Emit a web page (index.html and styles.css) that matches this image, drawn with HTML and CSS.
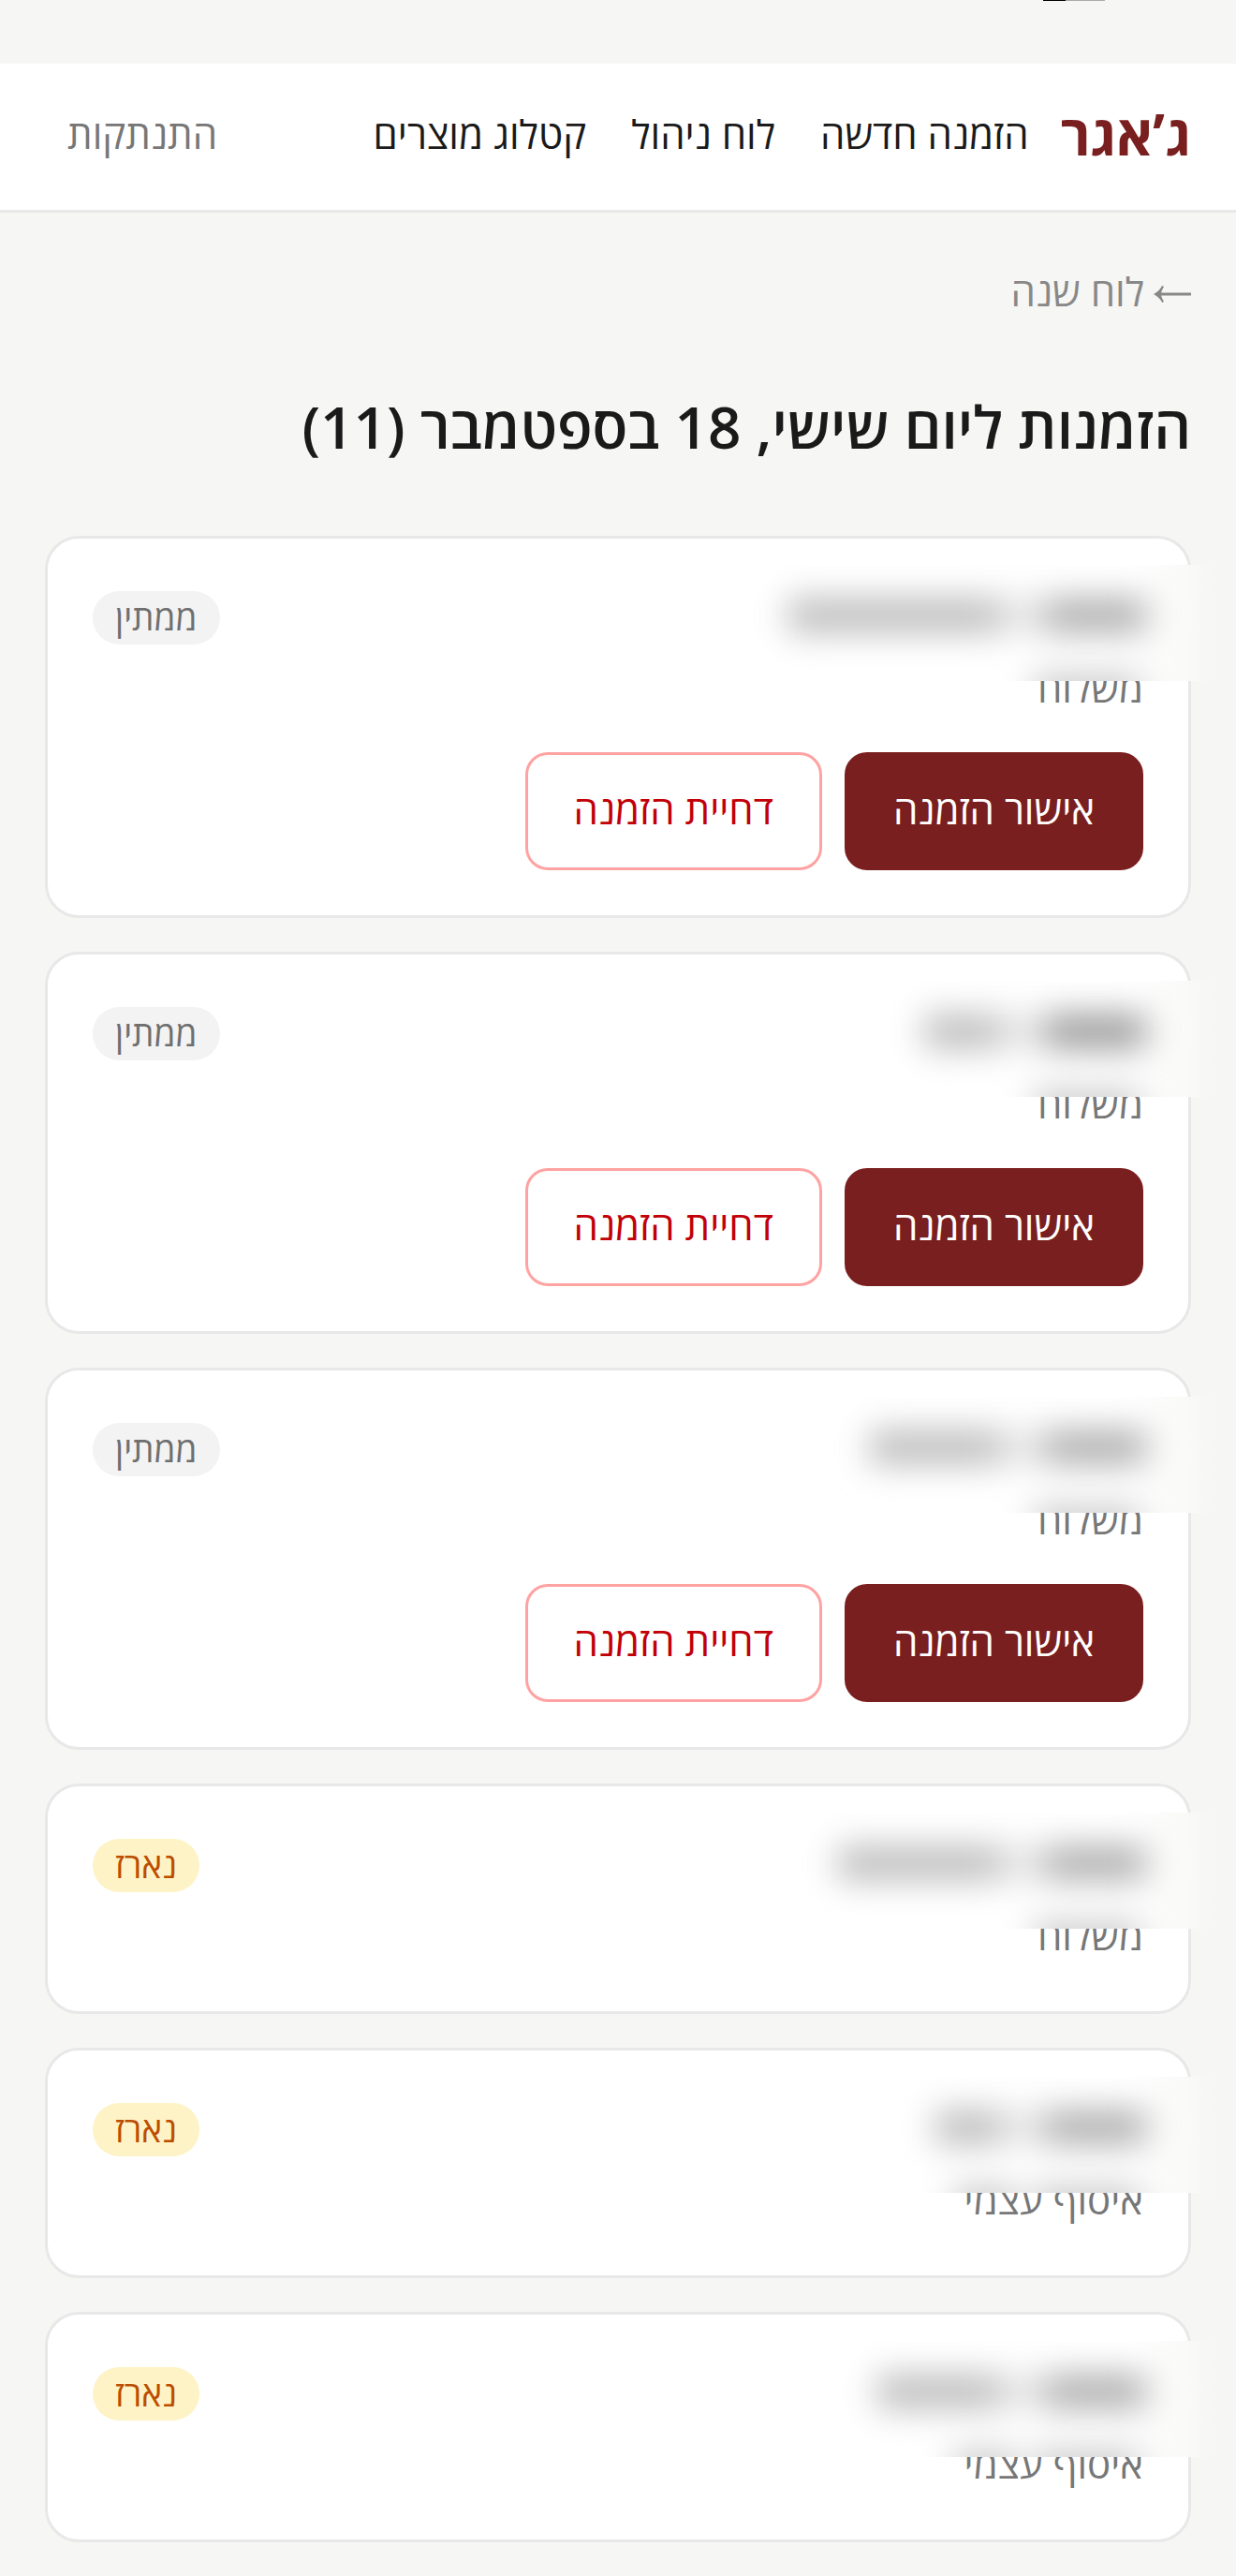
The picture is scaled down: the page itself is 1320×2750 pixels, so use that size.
FILE: index.html
```html
<!DOCTYPE html>
<html lang="he" dir="rtl">
<head>
    <meta charset="UTF-8">
    <meta name="viewport" content="width=device-width, initial-scale=1.0">
    <title>הזמנות ליום שישי</title>
    <link rel="stylesheet" href="styles.css">
</head>
<body>
    <div class="status-bar"><span class="battery"></span></div>

    <header class="navbar">
        <a class="logo" href="#">ג’אגר</a>
        <nav class="nav-links">
            <a href="#">הזמנה חדשה</a>
            <a href="#">לוח ניהול</a>
            <a href="#">קטלוג מוצרים</a>
        </nav>
        <button class="logout" type="button">התנתקות</button>
    </header>

    <main class="page">
        <a class="back" href="#">
            <svg class="arrow" viewBox="0 0 40 20" aria-hidden="true">
                <path d="M5 10H40" fill="none" stroke="currentColor" stroke-width="3"/>
                <path d="M0 10Q7 6 9 1L11 2Q8 7 8 10Q8 13 11 18L9 19Q7 14 0 10Z" fill="currentColor"/>
            </svg>
            <span>לוח שנה</span>
        </a>
        <h1>הזמנות ליום שישי, 18 בספטמבר (11)</h1>

        <div class="orders">
            <article class="card">
                <div class="card-head">
                    <p class="delivery">משלוח</p>
                    <span class="badge">ממתין</span>
                </div>
                <div class="actions">
                    <button class="approve" type="button">אישור הזמנה</button>
                    <button class="reject" type="button">דחיית הזמנה</button>
                </div>
                <div class="private" aria-hidden="true">
                    <div class="smudge"><i class="num"></i><i class="dash"></i><i class="name" style="width: 225px"></i></div>
                    <div class="smudge low"><i class="word"></i></div>
                </div>
            </article>

            <article class="card">
                <div class="card-head">
                    <p class="delivery">משלוח</p>
                    <span class="badge">ממתין</span>
                </div>
                <div class="actions">
                    <button class="approve" type="button">אישור הזמנה</button>
                    <button class="reject" type="button">דחיית הזמנה</button>
                </div>
                <div class="private" aria-hidden="true">
                    <div class="smudge"><i class="num dark"></i><i class="dash"></i><i class="name" style="width: 80px"></i></div>
                    <div class="smudge low"><i class="word"></i></div>
                </div>
            </article>

            <article class="card">
                <div class="card-head">
                    <p class="delivery">משלוח</p>
                    <span class="badge">ממתין</span>
                </div>
                <div class="actions">
                    <button class="approve" type="button">אישור הזמנה</button>
                    <button class="reject" type="button">דחיית הזמנה</button>
                </div>
                <div class="private" aria-hidden="true">
                    <div class="smudge"><i class="num"></i><i class="dash"></i><i class="name" style="width: 138px"></i></div>
                    <div class="smudge low"><i class="word"></i></div>
                </div>
            </article>

            <article class="card">
                <div class="card-head">
                    <p class="delivery">משלוח</p>
                    <span class="badge packed">נארז</span>
                </div>
                <div class="private" aria-hidden="true">
                    <div class="smudge"><i class="num"></i><i class="dash"></i><i class="name" style="width: 172px"></i></div>
                    <div class="smudge low"><i class="word"></i></div>
                </div>
            </article>

            <article class="card">
                <div class="card-head">
                    <p class="delivery">איסוף עצמי</p>
                    <span class="badge packed">נארז</span>
                </div>
                <div class="private" aria-hidden="true">
                    <div class="smudge"><i class="num"></i><i class="dash"></i><i class="name" style="width: 68px"></i></div>
                    <div class="smudge low"><i class="word"></i><i class="word short"></i></div>
                </div>
            </article>

            <article class="card">
                <div class="card-head">
                    <p class="delivery">איסוף עצמי</p>
                    <span class="badge packed">נארז</span>
                </div>
                <div class="private" aria-hidden="true">
                    <div class="smudge"><i class="num"></i><i class="dash"></i><i class="name" style="width: 130px"></i></div>
                    <div class="smudge low"><i class="word"></i><i class="word short"></i></div>
                </div>
            </article>
        </div>
    </main>
</body>
</html>
```
FILE: styles.css
```css
* {
    box-sizing: border-box;
}

body {
    margin: 0;
    background-color: #f6f6f4;
    color: #1a1a1a;
    font-family: "Open Sans", "Noto Sans", sans-serif;
    font-size: 42px;
    line-height: 60px;
}

a {
    color: inherit;
    text-decoration: none;
}

button {
    font: inherit;
    cursor: pointer;
}

.status-bar {
    height: 68px;
    padding-right: 140px;
}

.battery {
    display: block;
    width: 66px;
    height: 1px;
    background: linear-gradient(to left, #aaa 42px, #000 42px);
}

/* top navigation */
.navbar {
    display: flex;
    align-items: center;
    height: 159px;
    padding: 0 48px 6px;
    background-color: #fff;
    border-bottom: 3px solid #e8e8e8;
}

.logo {
    color: #7a1f1f;
    font-size: 60px;
    font-weight: 700;
}

.nav-links {
    display: flex;
    margin-right: 10px;
}

.nav-links a {
    padding: 0 24px;
}

.logout {
    margin-right: auto;
    padding: 0 24px;
    border: none;
    background: none;
    color: #777;
}

/* page */
.page {
    padding: 54px 48px 36px;
}

.back {
    display: flex;
    align-items: center;
    gap: 10px;
    color: #888;
}

.arrow {
    width: 40px;
    height: 20px;
    margin-top: 6px;
}

h1 {
    margin: 72px 0 75px;
    font-size: 62px;
    font-weight: 600;
    line-height: 84px;
}

.orders {
    display: flex;
    flex-direction: column;
    gap: 36px;
}

.card {
    position: relative;
    padding: 48px;
    background-color: #fff;
    border: 3px solid #e8e8e8;
    border-radius: 36px;
}

.card-head {
    display: flex;
    justify-content: space-between;
    align-items: flex-start;
    min-height: 144px;
}

.delivery {
    margin: 81px 0 0;
    color: #777;
}

.badge {
    margin-top: 8px;
    padding: 0 24px 2px;
    border-radius: 30px;
    background-color: #f3f3f3;
    color: #6f6f6f;
    font-size: 37px;
    line-height: 55px;
}

.badge.packed {
    background-color: #fef3c6;
    color: #bb4d00;
}

.actions {
    display: flex;
    gap: 24px;
    margin-top: 36px;
}

.actions button {
    height: 126px;
    padding: 0 49px 4px;
    border: 3px solid #7a1f1f;
    border-radius: 24px;
}

.actions .approve {
    background-color: #7a1f1f;
    color: #fff;
}

.actions .reject {
    background-color: #fff;
    border-color: #ffa2a2;
    color: #c10007;
}

/* customer details are smudged out */
.private {
    position: absolute;
    top: 28px;
    right: -30px;
    width: 506px;
    height: 124px;
    padding: 36px 75px 0 0;
    overflow: hidden;
    background: linear-gradient(to left, #f6f6f4, #fafaf9 36px, #fff 90px);
}

.smudge {
    display: flex;
    align-items: center;
    height: 36px;
    filter: blur(18px);
}

.smudge.low {
    gap: 18px;
    margin-top: 46px;
    padding-right: 6px;
}

.smudge i {
    flex: none;
    height: 36px;
    background-color: #bbb;
}

.smudge .num {
    width: 107px;
    background-color: #acacac;
}

.smudge .num.dark {
    background-color: #989898;
}

.smudge .dash {
    width: 50px;
    background-color: #e4e4e4;
}

.smudge .word {
    width: 114px;
    background-color: #c8c8c8;
}

.smudge .short {
    width: 68px;
}
```
